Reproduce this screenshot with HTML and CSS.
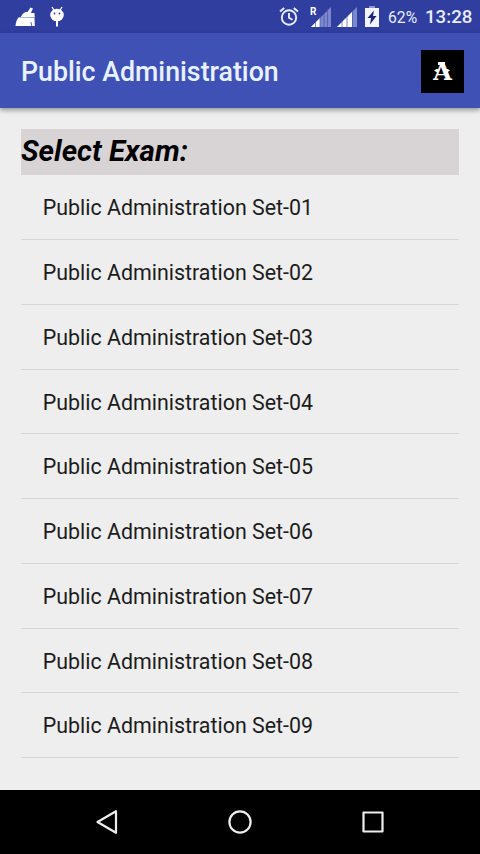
FILE: index.html
```html
<!DOCTYPE html>
<html lang="en">
<head>
<meta charset="utf-8">
<title>Public Administration</title>
<link rel="stylesheet" href="styles.css">
</head>
<body>
<div class="status">
  <svg class="clean" width="22" height="22" viewBox="0 0 22 22" fill="#fff"><path d="M15.500 1.500l2.500 1-2.200 4.500h3.600l.4 4.500-14-.5c1.500-3.500 4-5.200 7-5.200zM3.800 11.200l15.700.8.300 8H.5c.3-3.500 1.300-6.700 3.300-8.800z"/><path d="M16 16l.8 4" stroke="#303f9f" stroke-width=".8"/></svg>
  <svg class="bug" width="16" height="22" viewBox="0 0 16 22" fill="#fff"><path d="M3 1l2.500 4M13 1l-2.500 4" stroke="#fff" stroke-width="1.300"/><ellipse cx="8" cy="9" rx="6.800" ry="6.300"/><path d="M7 15h2v5.500H7z"/><circle cx="5.500" cy="7.500" r=".9" fill="#303f9f"/><circle cx="10.500" cy="7.500" r=".9" fill="#303f9f"/></svg>
  <div class="spacer"></div>
  <svg class="alarm" width="20" height="20" viewBox="0 0 20 20" fill="none" stroke="#e9edff" stroke-width="1.900"><circle cx="10" cy="11.500" r="7.200"/><path d="M1 5.500l4.200-3.500M19 5.500l-4.200-3.500M10 7v4.800l3.500 2"/></svg>
  <svg class="signal-r" width="22" height="22" viewBox="0 0 22 22"><path d="M1 21L21 1v20z" fill="#7c88cc"/><path d="M1 21l9-9v9z" fill="#fff"/><path d="M5.500 16v5M10 10v11M14 7v14M17.500 3v18" stroke="#4854ac" stroke-width=".7"/><text class="roam" x="0" y="9">R</text></svg>
  <svg class="signal" width="21" height="22" viewBox="0 0 21 22"><path d="M0 21L20 1v20z" fill="#7c88cc"/><path d="M0 21L15 6v15z" fill="#fff"/><path d="M5 15v6M10 10v11M15.500 5v16" stroke="#4854ac" stroke-width=".7"/></svg>
  <svg class="battery" width="14" height="22" viewBox="0 0 14 22"><path d="M4 0h6v2h4v19H0V2h4z" fill="#f2f5ff"/><path d="M4 0h6v2H4z" fill="#8f99d3"/><path d="M9 4.500L2.500 12H6l-1 6.500L11.500 10H8z" fill="#1e2873"/></svg>
  <span class="percent">62%</span>
  <span class="time">13:28</span>
</div>
<header class="appbar">
  <h1>Public Administration</h1>
  <div class="logo">A</div>
</header>
<main>
  <h2>Select Exam:</h2>
  <ul>
    <li>Public Administration Set-01</li>
    <li>Public Administration Set-02</li>
    <li>Public Administration Set-03</li>
    <li>Public Administration Set-04</li>
    <li>Public Administration Set-05</li>
    <li>Public Administration Set-06</li>
    <li>Public Administration Set-07</li>
    <li>Public Administration Set-08</li>
    <li>Public Administration Set-09</li>
  </ul>
</main>
<nav>
  <svg width="26" height="26" viewBox="0 0 26 26"><path d="M3.500 13L22 2.200v21.600z"/></svg>
  <svg width="26" height="26" viewBox="0 0 26 26"><circle cx="13" cy="13" r="10.600"/></svg>
  <svg width="26" height="26" viewBox="0 0 26 26"><rect x="3.500" y="3.500" width="19" height="19"/></svg>
</nav>
</body>
</html>
```
FILE: styles.css
```css
* { box-sizing: border-box; }
body {
  margin: 0;
  width: 480px;
  height: 854px;
  display: flex;
  flex-direction: column;
  background: #eee;
  font-family: Roboto, sans-serif;
  overflow: hidden;
}
.status {
  height: 33px;
  flex: none;
  display: flex;
  align-items: flex-start;
  padding: 6px 9px 0 15px;
  background: #303f9f;
  color: #e9edff;
}
.status svg { flex: none; }
.bug { margin-left: 12px; }
.spacer { flex: 1; }
.alarm { margin-right: 11px; }
.signal-r { margin-right: 5px; }
.signal { margin-right: 7px; }
.battery { margin-right: 9px; }
.roam { font: bold 10px Roboto, sans-serif; fill: #fff; }
.percent { width: 37px; font-size: 15.700px; line-height: 23px; }
.time { width: 46px; font-size: 18.700px; font-weight: 500; line-height: 23px; white-space: nowrap; }
.appbar {
  position: relative;
  height: 75px;
  flex: none;
  display: flex;
  align-items: center;
  justify-content: space-between;
  padding: 1px 16px 0 21px;
  background: #3f51b5;
  box-shadow: 0 2px 5px rgba(0, 0, 0, .4);
}
h1 { margin: 2px 0 0; font-size: 26.750px; font-weight: 500; color: #e8f1ff; white-space: nowrap; }
.logo {
  position: relative;
  width: 43px;
  height: 43px;
  background: #000;
  color: #fff;
  font: bold 24px/43px "DejaVu Serif", serif;
  text-align: center;
}
/* Slab top and side spurs of the decorated letter */
.logo::before,
.logo::after {
  content: "";
  position: absolute;
  background: #fff;
}
.logo::before { left: 17px; top: 12px; width: 7px; height: 3px; }
.logo::after {
  left: 13px;
  top: 19px;
  width: 16px;
  height: 4px;
  clip-path: polygon(0 50%, 20% 0, 35% 50%, 20% 100%, 0 50%, 100% 50%, 80% 0, 65% 50%, 80% 100%, 100% 50%);
}
main { flex: 1; padding: 21px 21px 0; }
h2 {
  margin: 0;
  height: 46px;
  background: #d8d4d5;
  color: #000;
  font-size: 29.500px;
  line-height: 44px;
  font-style: italic;
  font-weight: 700;
}
ul { margin: 0; padding: .400px 0 0; list-style: none; }
li {
  height: 64.750px;
  padding-left: 21.800px;
  border-bottom: 1px solid #d6d6d6;
  color: #1c1c1c;
  font-size: 21.400px;
  line-height: 66px;
}
nav {
  height: 64px;
  flex: none;
  display: flex;
  justify-content: center;
  align-items: center;
  gap: 107px;
  background: #000;
}
nav svg { fill: none; stroke: #eee; stroke-width: 2.200; stroke-linejoin: round; }
```
